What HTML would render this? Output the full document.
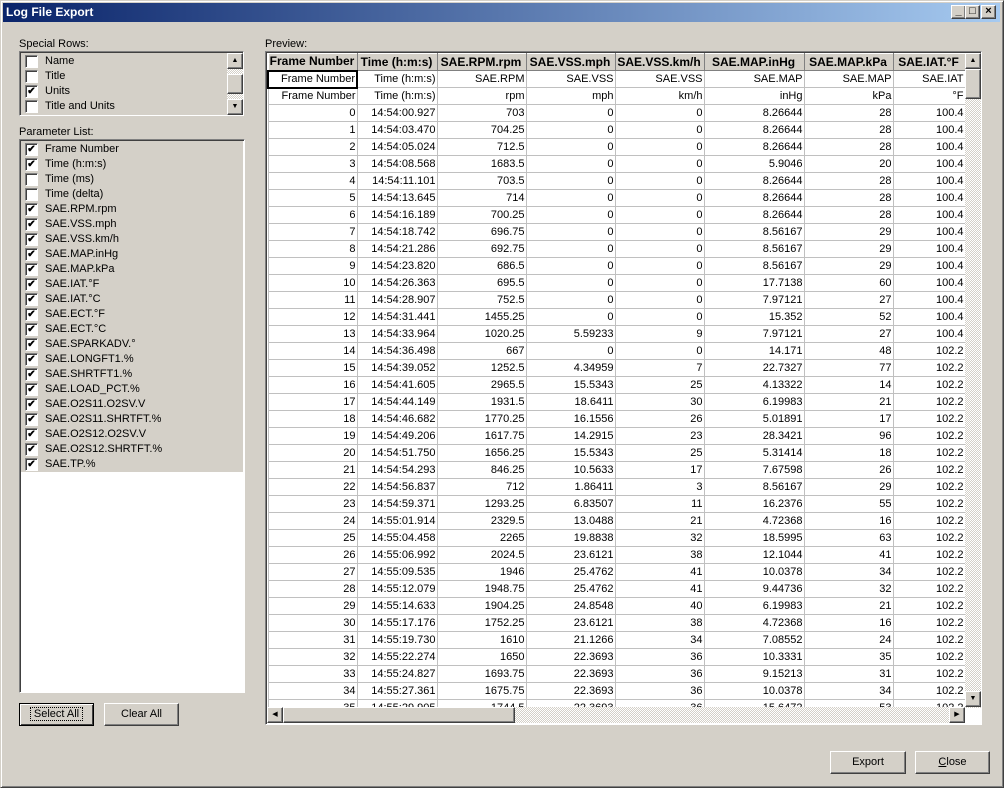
<!DOCTYPE html>
<html><head><meta charset="utf-8"><style>
*{box-sizing:border-box;margin:0;padding:0}
body{width:1004px;height:788px;background:#d4d0c8;font-family:"Liberation Sans",sans-serif;font-size:11px;color:#000;position:relative;overflow:hidden}
.abs{position:absolute}
.win{left:0;top:0;width:1004px;height:788px;border:1px solid #d4d0c8;border-right-color:#404040;border-bottom-color:#404040;box-shadow:inset 1px 1px #fff,inset -1px -1px #808080}
.title{left:3px;top:3px;width:997px;height:19px;background:linear-gradient(90deg,#0a246a,#a6caf0);color:#fff;font-weight:bold;font-size:12px;line-height:19px;padding-left:3px}
.tb{top:5px;width:15px;height:14px;background:#d4d0c8;border:1px solid;border-color:#fff #404040 #404040 #fff;box-shadow:inset -1px -1px #808080;font-size:11px;line-height:11px;text-align:center;font-weight:bold}
.sunk{border:1px solid;border-color:#808080 #fff #fff #808080;box-shadow:inset 1px 1px #404040}
.btn{background:#d4d0c8;border:1px solid;border-color:#fff #404040 #404040 #fff;box-shadow:inset -1px -1px #808080;text-align:center;line-height:20px;font-size:11px}
.item{position:absolute;left:3px;height:15px;line-height:15px;width:100%}
.cb{position:absolute;left:2px;top:1px;width:13px;height:13px;background:#fff;border:1px solid;border-color:#808080 #fff #fff #808080;box-shadow:inset 1px 1px #404040;font-size:10px;line-height:11px;text-align:center;font-weight:bold}
.item span{position:absolute;left:22px}
.sbtn{position:absolute;width:16px;height:16px;background:#d4d0c8;border:1px solid;border-color:#fff #404040 #404040 #fff;box-shadow:inset -1px -1px #808080;font-size:7px;line-height:14px;text-align:center}
.dith{background-color:#fff;background-image:linear-gradient(45deg,#d4d0c8 25%,transparent 25%,transparent 75%,#d4d0c8 75%),linear-gradient(45deg,#d4d0c8 25%,transparent 25%,transparent 75%,#d4d0c8 75%);background-size:2px 2px;background-position:0 0,1px 1px}
table{border-collapse:collapse;table-layout:fixed;background:#fff}
td,th{height:17px;border:1px solid #c0c0c0;white-space:nowrap;overflow:hidden;text-align:right;padding:0 1px 0 0;font-weight:normal;font-size:11px;line-height:15px}
th{background:#d4d0c8;font-weight:bold;text-align:center;border:1px solid;border-color:#fff #808080 #808080 #fff;font-size:12px}
</style></head><body>
<div class="abs win"></div>
<div class="abs title">Log File Export</div>
<div class="abs tb" style="left:951px">_</div>
<div class="abs tb" style="left:965px">□</div>
<div class="abs tb" style="left:981px">×</div>

<div class="abs" style="left:19px;top:38px">Special Rows:</div>
<div class="abs sunk" style="left:19px;top:51px;width:225px;height:65px;background:#d4d0c8">
 <div class="item" style="top:2px"><div class="cb"></div><span>Name</span></div>
 <div class="item" style="top:17px"><div class="cb"></div><span>Title</span></div>
 <div class="item" style="top:32px"><div class="cb">✔</div><span>Units</span></div>
 <div class="item" style="top:47px"><div class="cb"></div><span>Title and Units</span></div>
 <div class="abs dith" style="left:207px;top:1px;width:16px;height:62px"></div>
 <div class="sbtn" style="left:207px;top:1px">▲</div>
 <div class="sbtn" style="left:207px;top:22px;height:20px"></div>
 <div class="sbtn" style="left:207px;top:47px">▼</div>
</div>

<div class="abs" style="left:19px;top:126px">Parameter List:</div>
<div class="abs sunk" style="left:19px;top:139px;width:226px;height:554px;background:#fff">
 <div class="abs" style="left:1px;top:1px;width:222px;height:331px;background:#d4d0c8"></div>
 <div class="item" style="top:2px"><div class="cb">✔</div><span>Frame Number</span></div>
 <div class="item" style="top:17px"><div class="cb">✔</div><span>Time (h:m:s)</span></div>
 <div class="item" style="top:32px"><div class="cb"></div><span>Time (ms)</span></div>
 <div class="item" style="top:47px"><div class="cb"></div><span>Time (delta)</span></div>
 <div class="item" style="top:62px"><div class="cb">✔</div><span>SAE.RPM.rpm</span></div>
 <div class="item" style="top:77px"><div class="cb">✔</div><span>SAE.VSS.mph</span></div>
 <div class="item" style="top:92px"><div class="cb">✔</div><span>SAE.VSS.km/h</span></div>
 <div class="item" style="top:107px"><div class="cb">✔</div><span>SAE.MAP.inHg</span></div>
 <div class="item" style="top:122px"><div class="cb">✔</div><span>SAE.MAP.kPa</span></div>
 <div class="item" style="top:137px"><div class="cb">✔</div><span>SAE.IAT.°F</span></div>
 <div class="item" style="top:152px"><div class="cb">✔</div><span>SAE.IAT.°C</span></div>
 <div class="item" style="top:167px"><div class="cb">✔</div><span>SAE.ECT.°F</span></div>
 <div class="item" style="top:182px"><div class="cb">✔</div><span>SAE.ECT.°C</span></div>
 <div class="item" style="top:197px"><div class="cb">✔</div><span>SAE.SPARKADV.°</span></div>
 <div class="item" style="top:212px"><div class="cb">✔</div><span>SAE.LONGFT1.%</span></div>
 <div class="item" style="top:227px"><div class="cb">✔</div><span>SAE.SHRTFT1.%</span></div>
 <div class="item" style="top:242px"><div class="cb">✔</div><span>SAE.LOAD_PCT.%</span></div>
 <div class="item" style="top:257px"><div class="cb">✔</div><span>SAE.O2S11.O2SV.V</span></div>
 <div class="item" style="top:272px"><div class="cb">✔</div><span>SAE.O2S11.SHRTFT.%</span></div>
 <div class="item" style="top:287px"><div class="cb">✔</div><span>SAE.O2S12.O2SV.V</span></div>
 <div class="item" style="top:302px"><div class="cb">✔</div><span>SAE.O2S12.SHRTFT.%</span></div>
 <div class="item" style="top:317px"><div class="cb">✔</div><span>SAE.TP.%</span></div>
</div>

<div class="abs btn" style="left:19px;top:703px;width:75px;height:23px;border:1px solid #000;box-shadow:inset 1px 1px #fff,inset -1px -1px #404040"><span style="outline:1px dotted #000;padding:0 3px">Select All</span></div>
<div class="abs btn" style="left:104px;top:703px;width:75px;height:23px">Clear All</div>

<div class="abs" style="left:265px;top:38px">Preview:</div>
<div class="abs sunk" style="left:265px;top:51px;width:717px;height:674px;background:#fff;overflow:hidden">
 <div class="abs" style="left:1px;top:1px;width:698px;height:654px;overflow:hidden">
 <table style="width:697px">
 <colgroup><col style="width:89px"><col style="width:80px"><col style="width:89px"><col style="width:89px"><col style="width:89px"><col style="width:100px"><col style="width:89px"><col style="width:72px"></colgroup>
 <tr><th>Frame Number</th><th>Time (h:m:s)</th><th>SAE.RPM.rpm</th><th>SAE.VSS.mph</th><th>SAE.VSS.km/h</th><th>SAE.MAP.inHg</th><th>SAE.MAP.kPa</th><th>SAE.IAT.°F</th></tr>
 <tr><td style="border:2px solid #000">Frame Number</td><td>Time (h:m:s)</td><td>SAE.RPM</td><td>SAE.VSS</td><td>SAE.VSS</td><td>SAE.MAP</td><td>SAE.MAP</td><td>SAE.IAT</td></tr>
 <tr><td>Frame Number</td><td>Time (h:m:s)</td><td>rpm</td><td>mph</td><td>km/h</td><td>inHg</td><td>kPa</td><td>°F</td></tr>
 <tr><td>0</td><td>14:54:00.927</td><td>703</td><td>0</td><td>0</td><td>8.26644</td><td>28</td><td>100.4</td></tr>
 <tr><td>1</td><td>14:54:03.470</td><td>704.25</td><td>0</td><td>0</td><td>8.26644</td><td>28</td><td>100.4</td></tr>
 <tr><td>2</td><td>14:54:05.024</td><td>712.5</td><td>0</td><td>0</td><td>8.26644</td><td>28</td><td>100.4</td></tr>
 <tr><td>3</td><td>14:54:08.568</td><td>1683.5</td><td>0</td><td>0</td><td>5.9046</td><td>20</td><td>100.4</td></tr>
 <tr><td>4</td><td>14:54:11.101</td><td>703.5</td><td>0</td><td>0</td><td>8.26644</td><td>28</td><td>100.4</td></tr>
 <tr><td>5</td><td>14:54:13.645</td><td>714</td><td>0</td><td>0</td><td>8.26644</td><td>28</td><td>100.4</td></tr>
 <tr><td>6</td><td>14:54:16.189</td><td>700.25</td><td>0</td><td>0</td><td>8.26644</td><td>28</td><td>100.4</td></tr>
 <tr><td>7</td><td>14:54:18.742</td><td>696.75</td><td>0</td><td>0</td><td>8.56167</td><td>29</td><td>100.4</td></tr>
 <tr><td>8</td><td>14:54:21.286</td><td>692.75</td><td>0</td><td>0</td><td>8.56167</td><td>29</td><td>100.4</td></tr>
 <tr><td>9</td><td>14:54:23.820</td><td>686.5</td><td>0</td><td>0</td><td>8.56167</td><td>29</td><td>100.4</td></tr>
 <tr><td>10</td><td>14:54:26.363</td><td>695.5</td><td>0</td><td>0</td><td>17.7138</td><td>60</td><td>100.4</td></tr>
 <tr><td>11</td><td>14:54:28.907</td><td>752.5</td><td>0</td><td>0</td><td>7.97121</td><td>27</td><td>100.4</td></tr>
 <tr><td>12</td><td>14:54:31.441</td><td>1455.25</td><td>0</td><td>0</td><td>15.352</td><td>52</td><td>100.4</td></tr>
 <tr><td>13</td><td>14:54:33.964</td><td>1020.25</td><td>5.59233</td><td>9</td><td>7.97121</td><td>27</td><td>100.4</td></tr>
 <tr><td>14</td><td>14:54:36.498</td><td>667</td><td>0</td><td>0</td><td>14.171</td><td>48</td><td>102.2</td></tr>
 <tr><td>15</td><td>14:54:39.052</td><td>1252.5</td><td>4.34959</td><td>7</td><td>22.7327</td><td>77</td><td>102.2</td></tr>
 <tr><td>16</td><td>14:54:41.605</td><td>2965.5</td><td>15.5343</td><td>25</td><td>4.13322</td><td>14</td><td>102.2</td></tr>
 <tr><td>17</td><td>14:54:44.149</td><td>1931.5</td><td>18.6411</td><td>30</td><td>6.19983</td><td>21</td><td>102.2</td></tr>
 <tr><td>18</td><td>14:54:46.682</td><td>1770.25</td><td>16.1556</td><td>26</td><td>5.01891</td><td>17</td><td>102.2</td></tr>
 <tr><td>19</td><td>14:54:49.206</td><td>1617.75</td><td>14.2915</td><td>23</td><td>28.3421</td><td>96</td><td>102.2</td></tr>
 <tr><td>20</td><td>14:54:51.750</td><td>1656.25</td><td>15.5343</td><td>25</td><td>5.31414</td><td>18</td><td>102.2</td></tr>
 <tr><td>21</td><td>14:54:54.293</td><td>846.25</td><td>10.5633</td><td>17</td><td>7.67598</td><td>26</td><td>102.2</td></tr>
 <tr><td>22</td><td>14:54:56.837</td><td>712</td><td>1.86411</td><td>3</td><td>8.56167</td><td>29</td><td>102.2</td></tr>
 <tr><td>23</td><td>14:54:59.371</td><td>1293.25</td><td>6.83507</td><td>11</td><td>16.2376</td><td>55</td><td>102.2</td></tr>
 <tr><td>24</td><td>14:55:01.914</td><td>2329.5</td><td>13.0488</td><td>21</td><td>4.72368</td><td>16</td><td>102.2</td></tr>
 <tr><td>25</td><td>14:55:04.458</td><td>2265</td><td>19.8838</td><td>32</td><td>18.5995</td><td>63</td><td>102.2</td></tr>
 <tr><td>26</td><td>14:55:06.992</td><td>2024.5</td><td>23.6121</td><td>38</td><td>12.1044</td><td>41</td><td>102.2</td></tr>
 <tr><td>27</td><td>14:55:09.535</td><td>1946</td><td>25.4762</td><td>41</td><td>10.0378</td><td>34</td><td>102.2</td></tr>
 <tr><td>28</td><td>14:55:12.079</td><td>1948.75</td><td>25.4762</td><td>41</td><td>9.44736</td><td>32</td><td>102.2</td></tr>
 <tr><td>29</td><td>14:55:14.633</td><td>1904.25</td><td>24.8548</td><td>40</td><td>6.19983</td><td>21</td><td>102.2</td></tr>
 <tr><td>30</td><td>14:55:17.176</td><td>1752.25</td><td>23.6121</td><td>38</td><td>4.72368</td><td>16</td><td>102.2</td></tr>
 <tr><td>31</td><td>14:55:19.730</td><td>1610</td><td>21.1266</td><td>34</td><td>7.08552</td><td>24</td><td>102.2</td></tr>
 <tr><td>32</td><td>14:55:22.274</td><td>1650</td><td>22.3693</td><td>36</td><td>10.3331</td><td>35</td><td>102.2</td></tr>
 <tr><td>33</td><td>14:55:24.827</td><td>1693.75</td><td>22.3693</td><td>36</td><td>9.15213</td><td>31</td><td>102.2</td></tr>
 <tr><td>34</td><td>14:55:27.361</td><td>1675.75</td><td>22.3693</td><td>36</td><td>10.0378</td><td>34</td><td>102.2</td></tr>
 <tr><td>35</td><td>14:55:29.905</td><td>1744.5</td><td>22.3693</td><td>36</td><td>15.6472</td><td>53</td><td>102.2</td></tr>
 </table>
 </div>
 <div class="abs dith" style="left:699px;top:1px;width:16px;height:655px"></div>
 <div class="sbtn" style="left:699px;top:1px">▲</div>
 <div class="sbtn" style="left:699px;top:17px;height:30px"></div>
 <div class="sbtn" style="left:699px;top:639px">▼</div>
 <div class="abs dith" style="left:1px;top:655px;width:698px;height:16px"></div>
 <div class="sbtn" style="left:1px;top:655px">◀</div>
 <div class="sbtn" style="left:17px;top:655px;width:232px"></div>
 <div class="sbtn" style="left:683px;top:655px">▶</div>
</div>

<div class="abs btn" style="left:830px;top:751px;width:76px;height:23px">Export</div>
<div class="abs btn" style="left:915px;top:751px;width:75px;height:23px"><u>C</u>lose</div>
</body></html>
